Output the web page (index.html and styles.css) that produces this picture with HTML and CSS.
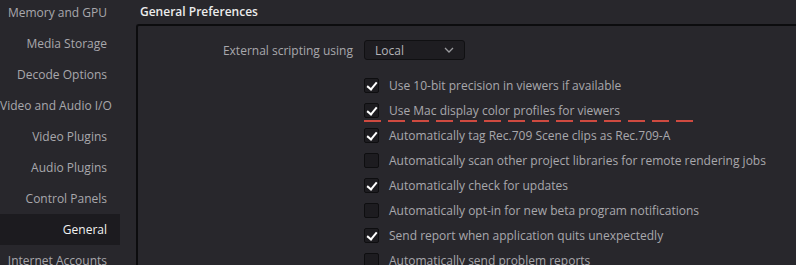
FILE: index.html
```html
<!DOCTYPE html>
<html lang="en">
<head>
  <meta charset="UTF-8" />
  <title>General Preferences</title>
  <link rel="stylesheet" href="styles.css">
</head>
<body>
  <div class="prefs">
    <ul class="sidebar">
      <li>Memory and GPU</li>
      <li>Media Storage</li>
      <li>Decode Options</li>
      <li>Video and Audio I/O</li>
      <li>Video Plugins</li>
      <li>Audio Plugins</li>
      <li>Control Panels</li>
      <li class="active">General</li>
      <li>Internet Accounts</li>
    </ul>

    <div class="main">
      <h2>General Preferences</h2>
      <div class="panel">
        <div class="field">
          <label>External scripting using</label>
          <div class="select">
            <span>Local</span>
            <svg width="10" height="6" viewBox="0 0 10 6"><path d="M1 1l4 4 4-4" fill="none" stroke="#9a9a9e" stroke-width="1.3"/></svg>
          </div>
        </div>

        <div class="options">
          <div class="option"><span class="box on"></span>Use 10-bit precision in viewers if available</div>
          <div class="option marked"><span class="box on"></span>Use Mac display color profiles for viewers<span class="dash"></span></div>
          <div class="option"><span class="box on"></span>Automatically tag Rec.709 Scene clips as Rec.709-A</div>
          <div class="option"><span class="box"></span>Automatically scan other project libraries for remote rendering jobs</div>
          <div class="option"><span class="box on"></span>Automatically check for updates</div>
          <div class="option"><span class="box"></span>Automatically opt-in for new beta program notifications</div>
          <div class="option"><span class="box on"></span>Send report when application quits unexpectedly</div>
          <div class="option"><span class="box"></span>Automatically send problem reports</div>
        </div>
      </div>
    </div>
  </div>
</body>
</html>
```

FILE: styles.css
```css
body {
  margin: 0;
  background: #28272c;
  font-family: 'Open Sans', 'DejaVu Sans', sans-serif;
  font-size: 12px;
  color: #a8a8ac;
  overflow: hidden;
}
.prefs {
  display: flex;
  height: 265px;
}
.sidebar {
  list-style: none;
  margin: -3px 0 0 0;
  padding: 0;
  width: 120px;
  flex: none;
}
.sidebar li {
  height: 31px;
  line-height: 31px;
  text-align: right;
  padding-right: 13px;
  white-space: nowrap;
}
.sidebar li.active {
  background: #1c1b1f;
  color: #f2f2f2;
}
.main {
  margin-left: 16px;
  flex: 1;
  display: flex;
  flex-direction: column;
}
h2 {
  margin: 0;
  height: 28px;
  line-height: 24px;
  padding-left: 4px;
  font-size: 12px;
  font-weight: 600;
  color: #ececec;
}
.panel {
  flex: 1;
  border-top: 2px solid #0c0c0e;
  border-left: 2px solid #0c0c0e;
  border-top-left-radius: 3px;
}
.field {
  display: flex;
  align-items: center;
  margin-top: 14px;
}
.field label {
  width: 215px;
  text-align: right;
  margin-right: 11px;
}
.select {
  height: 18px;
  width: 79px;
  padding: 0 10px;
  background: #1e1d21;
  border: 1px solid #101012;
  border-radius: 3px;
  display: flex;
  align-items: center;
  justify-content: space-between;
  color: #b4b4b8;
}
.options {
  margin-top: 13px;
  margin-left: 226px;
}
.option {
  position: relative;
  display: flex;
  align-items: center;
  height: 25px;
  white-space: nowrap;
}
.box {
  width: 13px;
  height: 13px;
  border: 1px solid #0e0e10;
  background: #1d1c20;
  border-radius: 2px;
  margin-right: 10px;
  position: relative;
}
.box.on::after {
  content: "";
  position: absolute;
  left: 4px;
  top: 1px;
  width: 4px;
  height: 8px;
  border: solid #fff;
  border-width: 0 2.5px 2.5px 0;
  transform: rotate(40deg);
}
.dash {
  position: absolute;
  left: 0;
  top: 22px;
  width: 329px;
  height: 2px;
  background: repeating-linear-gradient(to right, #cf4a40 0 17px, transparent 17px 24px);
}
```
